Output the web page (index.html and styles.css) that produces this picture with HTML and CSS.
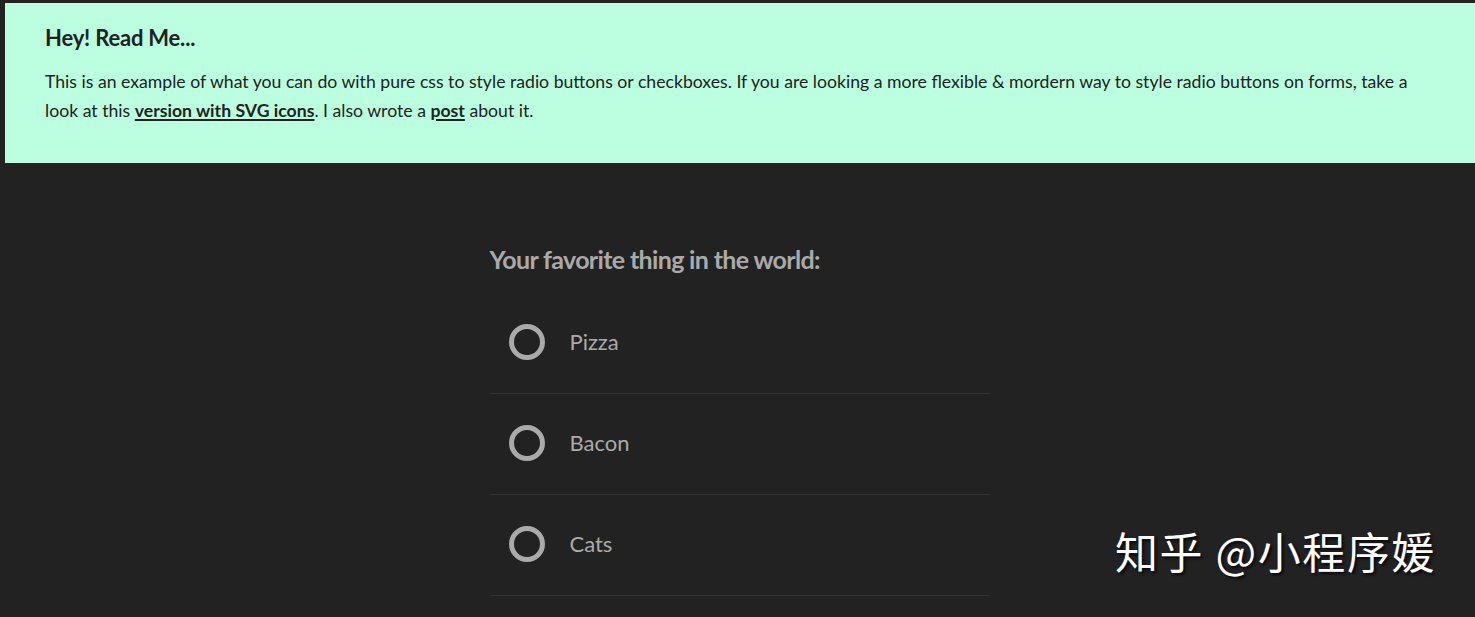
FILE: index.html
```html
<!DOCTYPE html>
<html lang="en">
<head>
<meta charset="utf-8">
<title>Radio buttons</title>
<link rel="stylesheet" href="styles.css">
</head>
<body>
<div class="notice">
  <h1 class="notice-title">Hey! Read Me...</h1>
  <p class="notice-text">This is an example of what you can do with pure css to style radio buttons or checkboxes. If you are looking a more flexible &amp; mordern way to style radio buttons on forms, take a look at this <a href="#">version with SVG icons</a>. I also wrote a <a href="#">post</a> about it.</p>
</div>
<main class="container">
  <h2 class="question">Your favorite thing in the world:</h2>
  <ul class="options">
    <li class="option"><span class="radio"></span><span class="label">Pizza</span></li>
    <li class="option"><span class="radio"></span><span class="label">Bacon</span></li>
    <li class="option"><span class="radio"></span><span class="label">Cats</span></li>
  </ul>
</main>
<div class="watermark">知乎 @小程序媛</div>
</body>
</html>
```
FILE: styles.css
```css
html, body {
  margin: 0;
  padding: 0;
  background: #222222;
  height: 100%;
  overflow: hidden;
}
body {
  font-family: Lato, "Open Sans", sans-serif;
  color: #aaaaaa;
}
.notice {
  box-sizing: border-box;
  margin: 3px 0 0 5px;
  background: #bbffe0;
  color: #222222;
  padding: 22px 40px 0 40px;
  height: 160px;
}
.notice-title {
  margin: 0 0 16px 0;
  font-size: 22px;
  font-weight: 700;
  line-height: 26px;
  letter-spacing: -0.2px;
}
.notice-text {
  margin: 0;
  font-size: 17.65px;
  line-height: 29px;
}
.notice-text a {
  color: #222222;
  font-weight: 700;
  text-decoration: underline;
  text-decoration-thickness: 2px;
  text-underline-offset: 2px;
}
.container {
  width: 500px;
  margin-left: calc(50% - 248px);
  padding-top: 81px;
}
.question {
  margin: 0 0 19px 0;
  font-size: 25px;
  font-weight: 700;
  line-height: 30px;
  letter-spacing: -0.65px;
  color: #aaaaaa;
}
.options {
  list-style: none;
  margin: 0;
  padding: 0;
}
.option {
  box-sizing: border-box;
  display: flex;
  align-items: center;
  height: 101px;
  border-bottom: 1px solid #333333;
  padding: 0 0 3px 19px;
}
.radio {
  box-sizing: border-box;
  width: 36px;
  height: 36px;
  border: 5px solid #aaaaaa;
  border-radius: 50%;
  margin-right: 25px;
}
.label {
  font-size: 22px;
  color: #aaaaaa;
}
.watermark {
  position: absolute;
  left: 1115px;
  top: 519px;
  font-family: "Noto Sans CJK SC", sans-serif;
  font-size: 43px;
  letter-spacing: 1.6px;
  color: #ffffff;
  text-shadow: 2px 2px 3px rgba(0,0,0,0.8);
  white-space: nowrap;
}
```
